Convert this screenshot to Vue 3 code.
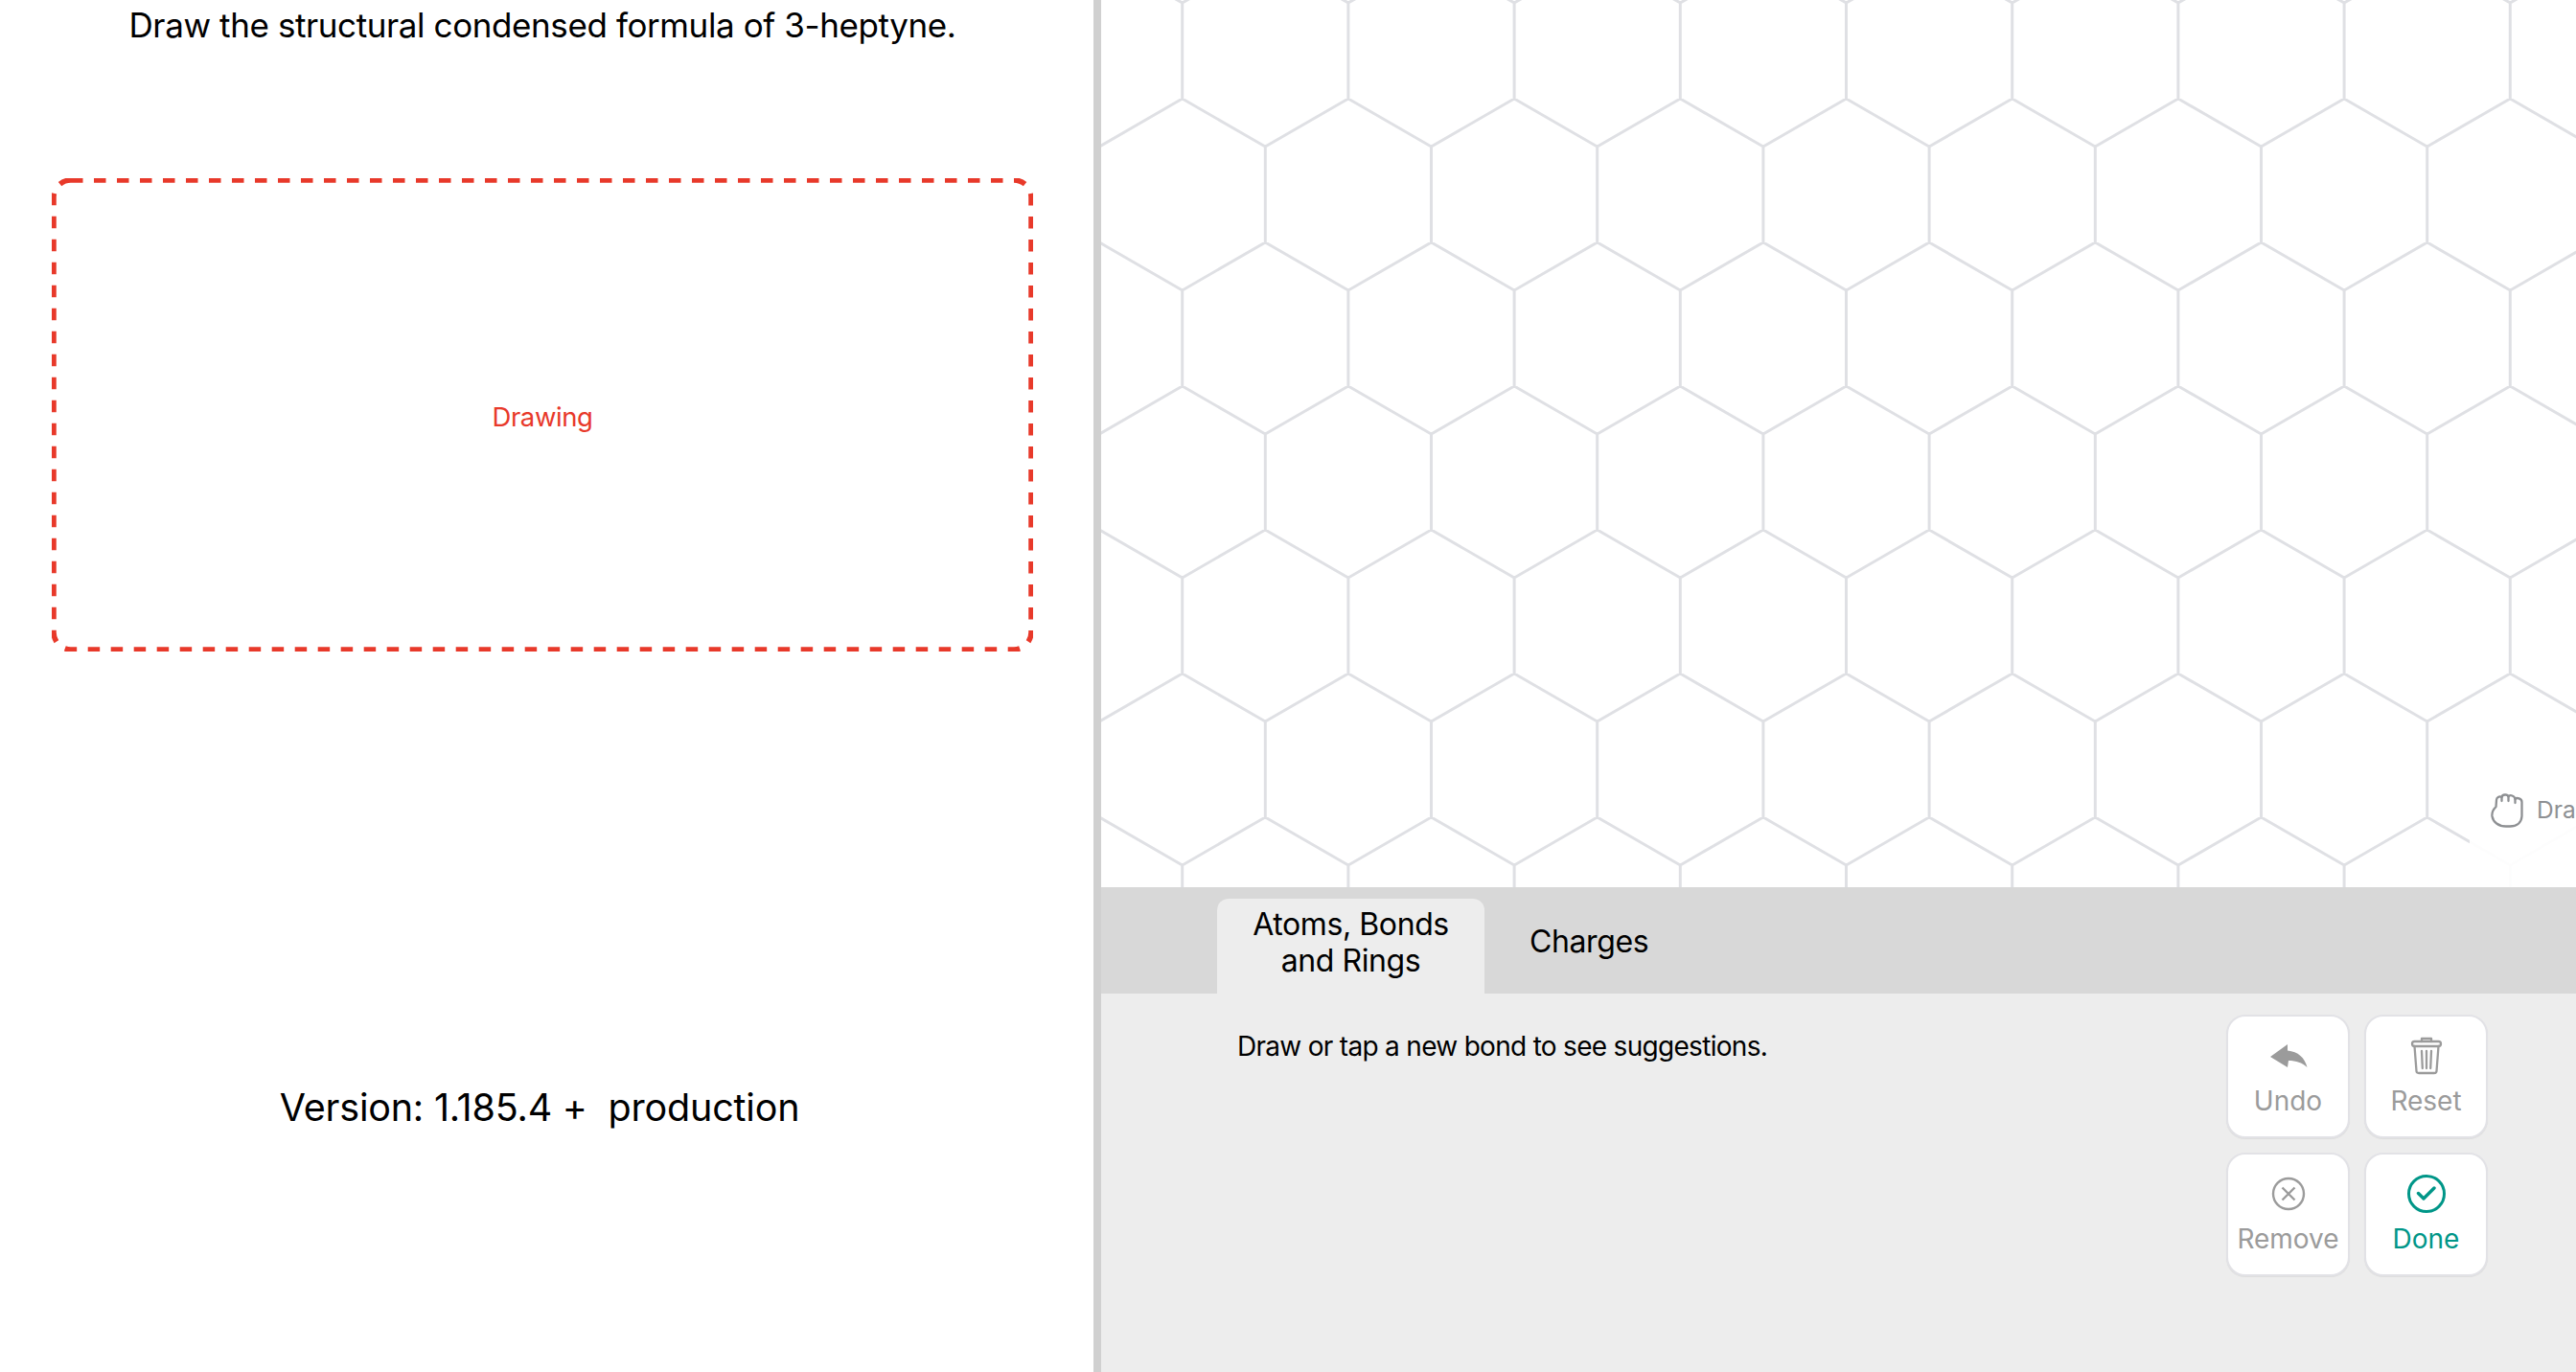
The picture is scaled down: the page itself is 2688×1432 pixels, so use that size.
<template>
  <div class="page">
    <div class="left">
      <p class="question">Draw the structural condensed formula of 3-heptyne.</p>
      <div class="drop-box">
        <svg class="dash" width="1024" height="494">
          <rect x="2" y="2" width="1020" height="490" rx="18" fill="none" stroke="#e8392a" stroke-width="5.500" stroke-dasharray="12.500 11.500" />
        </svg>
        Drawing
      </div>
      <p class="version">Version: 1.185.4 +&nbsp; production</p>
    </div>

    <div class="right">
      <div class="canvas">
        <svg class="grid" width="1539" height="926">
          <path :d="hexPath" fill="none" stroke="#dfe0e4" stroke-width="3" />
        </svg>
        <div class="drag-hint">
          <svg width="36" height="38" viewBox="0 0 36 38" fill="none" stroke="#8e9093" stroke-width="2.300" stroke-linecap="round" stroke-linejoin="round">
            <path d="M5.500 16C2.500 19 1 22.500 1.500 26C2.500 32 8 36.500 16 36.500H20C27 36.500 32 33 32.500 26V11C32.500 7.500 27 6 25.500 8C25 4.500 20 3 18.500 5.500C17.500 2.500 12 3 11.500 6C9 4.500 6 6.500 6 9Z" />
            <path d="M11.500 6V10M18.500 5.500V10M25.500 8V12" />
          </svg>
          <span>Drag</span>
        </div>
      </div>

      <div class="tabs">
        <div v-for="t in tabs" :key="t.label" class="tab" :class="{ active: t.active }">{{ t.label }}</div>
      </div>

      <div class="panel">
        <p class="hint">Draw or tap a new bond to see suggestions.</p>
        <div class="actions">
          <button class="action">
            <span class="icon">
              <svg width="40" height="26" viewBox="0 0 40 26"><path d="M1 14L19 1V7.500C30 8.500 37 15 39.500 25C34 20 28 18 20 18L19 25Z" fill="#9b9b9b" /></svg>
            </span>
            Undo
          </button>
          <button class="action">
            <span class="icon">
              <svg width="34" height="40" viewBox="0 0 34 40" fill="none" stroke="#9b9b9b" stroke-width="2.300" stroke-linecap="round" stroke-linejoin="round">
                <path d="M12 5V2H22V5" />
                <rect x="2" y="5" width="30" height="5" rx="2.500" />
                <path d="M4.500 10L6.500 36C6.600 37.500 7.500 38 9 38H25C26.500 38 27.400 37.500 27.500 36L29.500 10M12 15L12.800 33M17 15V33M22 15L21.200 33" />
              </svg>
            </span>
            Reset
          </button>
          <button class="action">
            <span class="icon">
              <svg width="36" height="36" viewBox="0 0 36 36" fill="none" stroke="#9b9b9b" stroke-width="2.400">
                <circle cx="18" cy="18" r="16" />
                <path d="M11.500 11.500L24.500 24.500M24.500 11.500L11.500 24.500" />
              </svg>
            </span>
            Remove
          </button>
          <button class="action done">
            <span class="icon">
              <svg width="42" height="42" viewBox="0 0 42 42" fill="none" stroke="#009688" stroke-width="3">
                <circle cx="21" cy="21" r="18.500" />
                <path d="M12.500 20.500L18 26L29 15" stroke-width="3.400" stroke-linecap="round" stroke-linejoin="round" />
              </svg>
            </span>
            Done
          </button>
        </div>
      </div>
    </div>
  </div>
</template>

<script setup>
const tabs = [
  { label: 'Atoms, Bonds and Rings', active: true },
  { label: 'Charges', active: false }
]

// hexagon lattice, one cell is 173.2 x 300
const W = 173.2
const buildHex = () => {
  let d = ''
  for (let row = -1; row < 4; row++) {
    for (let col = -1; col < 10; col++) {
      const x = 84.7 + col * W
      const y = 103 + row * 300
      d += `M${x} ${y}L${x + W / 2} ${y + 50}V${y + 150}L${x} ${y + 200}V${y + 300}`
      d += `M${x + W / 2} ${y + 50}L${x + W} ${y}M${x + W / 2} ${y + 150}L${x + W} ${y + 200}`
    }
  }
  return d
}
const hexPath = buildHex()
</script>

<style>
html, body {
  margin: 0;
  overflow: hidden;
}
</style>

<style scoped>
.page {
  display: flex;
  width: 2688px;
  height: 1432px;
  overflow: hidden;
  background: #fff;
  color: #000;
  font-family: Inter, "Liberation Sans", sans-serif;
}
.left {
  width: 1141px;
  flex: none;
  display: flex;
  flex-direction: column;
  align-items: center;
  box-sizing: border-box;
  padding-right: 9px;
}
.question {
  margin: 6px 0 0;
  height: 40px;
  font-size: 35px;
  line-height: 40px;
  letter-spacing: -0.4px;
  white-space: nowrap;
}
.drop-box {
  position: relative;
  margin-top: 140px;
  width: 1024px;
  height: 494px;
  box-sizing: border-box;
  padding-top: 3px;
  display: flex;
  align-items: center;
  justify-content: center;
  color: #e8392a;
  font-size: 27.500px;
  letter-spacing: -0.4px;
}
.dash {
  position: absolute;
  left: 0;
  top: 0;
}
.version {
  margin: 452px 6px 0 0;
  font-size: 39.500px;
  line-height: 48px;
  letter-spacing: -0.2px;
  white-space: nowrap;
}
.right {
  flex: 1;
  min-width: 0;
  display: flex;
  flex-direction: column;
  border-left: 8px solid #d0d0d0;
}
.canvas {
  position: relative;
  height: 926px;
  flex: none;
  overflow: hidden;
}
.grid {
  display: block;
}
.drag-hint {
  position: absolute;
  left: 1428px;
  top: 806px;
  bottom: 0;
  width: 200px;
  box-sizing: border-box;
  padding: 20px 0 0 22px;
  display: flex;
  align-items: flex-start;
  gap: 12px;
  background: rgba(255, 255, 255, 0.93);
  color: #8e9093;
  font-size: 24.500px;
  line-height: 38px;
}
.tabs {
  height: 111px;
  flex: none;
  display: flex;
  align-items: flex-end;
  padding-left: 121px;
  background: #d8d8d8;
  font-size: 32px;
  line-height: 38px;
  letter-spacing: -0.4px;
}
.tab {
  box-sizing: border-box;
  height: 99px;
  display: flex;
  align-items: center;
  justify-content: center;
  text-align: center;
  padding: 0 47px 9px;
}
.tab.active {
  width: 279px;
  padding: 0 30px 7px;
  background: #ededed;
  border-radius: 12px 12px 0 0;
}
.panel {
  flex: 1;
  display: flex;
  justify-content: space-between;
  align-items: flex-start;
  box-sizing: border-box;
  padding: 22px 92px 0 142px;
  background: #ededed;
}
.hint {
  margin: 15px 0 0;
  font-size: 28px;
  line-height: 36px;
  letter-spacing: -0.7px;
}
.actions {
  display: grid;
  grid-template-columns: repeat(2, 129px);
  grid-auto-rows: 129px;
  gap: 15px;
}
.action {
  box-sizing: border-box;
  display: flex;
  flex-direction: column;
  align-items: center;
  justify-content: flex-start;
  padding: 21px 0 0;
  background: #fff;
  border: 2px solid #e2e2e6;
  border-radius: 20px;
  box-shadow: 0 1px 1px rgba(0, 0, 0, 0.07);
  color: #9b9b9b;
  font-family: inherit;
  font-size: 28px;
  line-height: 34px;
}
.icon {
  height: 40px;
  margin-bottom: 10px;
  display: flex;
  align-items: center;
  justify-content: center;
}
.action.done {
  color: #009688;
}
</style>
